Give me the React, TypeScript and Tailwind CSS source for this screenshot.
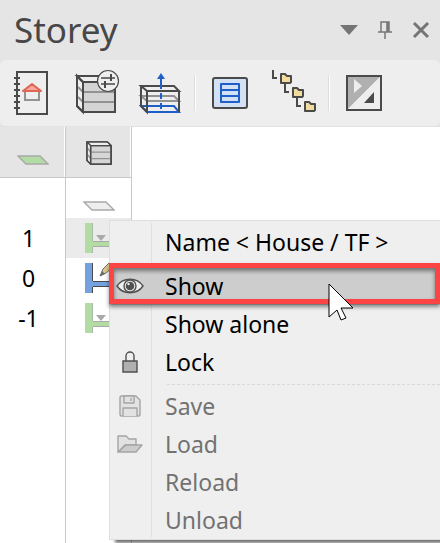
import type { ReactNode } from "react";

function ToolButton({ label, viewBox, children }: { label: string; viewBox: string; children: ReactNode }) {
  return (
    <button type="button" aria-label={label} className="h-12 w-16 shrink-0">
      <svg viewBox={viewBox} width="64" height="48" fill="none" stroke="#4a4a4a" strokeWidth="2">
        {children}
      </svg>
    </button>
  );
}

function Divider() {
  return <div className="mx-0.5 h-9 w-0.5 shrink-0 border-l border-[#dcdcdc] bg-white" />;
}

function Folder({ x, y }: { x: number; y: number }) {
  return (
    <g transform={`translate(${x} ${y})`}>
      <path d="M1 0v8h4" stroke="#4a4a4a" />
      <path d="M9 4h4l2 2h4v6l-1 1H9z" fill="#f1dc9d" stroke="#4a4a4a" strokeLinejoin="round" />
    </g>
  );
}

function Toolbar() {
  return (
    <div role="toolbar" className="flex h-[66px] items-center rounded-md bg-[#eeeeee]">
      <ToolButton label="Project" viewBox="0 69 64 48">
        <path d="M17 72h30v42H17z" />
        <path d="M14 78h6M14 84h6M14 90h6M14 96h6M14 102h6M14 108h6" />
        <path d="M25 91v9h14v-9" fill="#eeeeee" stroke="#929292" />
        <path d="M23 91l9-7 9 7z" fill="#f6a69c" stroke="#df6555" strokeLinejoin="round" />
      </ToolButton>
      <ToolButton label="Storey settings" viewBox="64 69 64 48">
        <path d="M77 76l6 6v30l-6-6z" fill="#eeeeee" />
        <path d="M77 76h32l7 6H83z" fill="#eeeeee" />
        <path d="M83 82h32v30H83z" fill="#d4d4d4" />
        <path d="M78 87l5 5h32M78 97l5 5h32" stroke="#929292" />
        <path d="M77 76l6 6h32v30H83l-6-6V76zM83 82v30" />
        <circle cx="108" cy="81" r="10.500" fill="#eeeeee" strokeWidth="1.2" />
        <path d="M101 78h14M101 84h14" strokeWidth="1.4" />
        <path d="M111 74v7M105 81v7" />
      </ToolButton>
      <ToolButton label="Storey height" viewBox="128 69 64 48">
        <path d="M141 96l6 5h32l-5-5z" stroke="#929292" />
        <path d="M141 86h33l5 5h-32zM147 91v21M179 91v21M141 86v20" />
        <path d="M141 106l6 6h32l-5-6z" stroke="#1f5fc9" />
        <path d="M141 86v20l6 6V91M179 91v21" />
        <path d="M161 78v11M161 93v6M161 103v6" stroke="#1f5fc9" />
        <path d="M161 73l4 6h-8z" fill="#1f5fc9" stroke="none" />
      </ToolButton>
      <Divider />
      <ToolButton label="List view" viewBox="198 69 64 48">
        <rect x="213" y="78" width="34" height="30" rx="2" fill="#d3e1f4" />
        <path d="M221 84h18v18h-18zM221 90h18M221 96h18" stroke="#1f5fc9" strokeLinejoin="round" />
      </ToolButton>
      <ToolButton label="Structure" viewBox="262 69 64 48">
        <Folder x={272} y={70} />
        <Folder x={284} y={84} />
        <Folder x={296} y={98} />
      </ToolButton>
      <Divider />
      <ToolButton label="Visibility" viewBox="332 69 64 48">
        <path d="M347 76h34l-34 34z" fill="#b0b0b0" stroke="none" />
        <path d="M381 76v34h-34z" fill="#eeeeee" stroke="none" />
        <path d="M347 76h34v34h-34z" />
        <path d="M354 79l8 7-8 7z" fill="#eeeeee" stroke="none" />
        <path d="M374 92v11h-10z" fill="#4a4a4a" stroke="none" />
      </ToolButton>
    </div>
  );
}

function Plan({ fill }: { fill: string }) {
  return (
    <svg viewBox="0 0 32 10" width="32" height="10" fill={fill} stroke="#a9a9a9" strokeWidth="1.4" className="mx-auto">
      <path d="M1 1h22l8 8H9z" />
    </svg>
  );
}

function StoreyMark({ active = false }: { active?: boolean }) {
  return (
    <svg viewBox="0 0 34 32" width="34" height="32" className="ml-[18px]">
      <path d="M9 19h25v6H9z" fill={active ? "#4a4a4a" : "#a9a9a9"} />
      <path d="M8 20h26v4H8z" fill={active ? "#75a1df" : "#b2dca4"} />
      <path d="M1 1h8v30H1z" fill={active ? "#75a1df" : "#b2dca4"} />
      <path
        d="M8.500 1v18M8.500 25v6"
        stroke={active ? "#4a4a4a" : "#a9bba4"}
      />
      {active ? (
        <>
          <path d="M16 14l3-7 9-9 4 4-10 9z" fill="#dcc68c" stroke="#6b6b6b" />
          <path d="M16 14l2-5 3 3z" fill="#6b6b6b" />
        </>
      ) : (
        <path d="M12 13h10l-5 6z" fill="#a9a9a9" />
      )}
    </svg>
  );
}

function StoreyTable() {
  const names = ["1", "0", "-1"];
  return (
    <table className="w-[132px] table-fixed border-separate border-spacing-0 bg-white">
      <thead>
        <tr className="h-[51px]">
          <th aria-label="Level" className="border-r border-b border-[#c8c8c8] bg-[#e5e5e5] p-0 shadow-[inset_-1px_0_0_white]">
            <div className="pt-4"><Plan fill="#b2dca4" /></div>
          </th>
          <th aria-label="Building" className="border-r border-b border-[#c8c8c8] bg-[#e5e5e5] p-0 pt-0.5 shadow-[inset_-1px_0_0_white]">
            <svg viewBox="0 0 28 28" width="26" height="26" fill="none" stroke="#4a4a4a" strokeWidth="1.5" className="mx-auto">
              <path d="M1 2h22l4 4v20H5l-4-4z" fill="#eeeeee" />
              <path d="M5 6h22v20H5z" fill="#d6d6d6" />
              <path d="M1 8l4 5h22M1 15l4 5h22" stroke="#929292" />
              <path d="M1 2h22l4 4v20H5l-4-4zM1 2l4 4h22M5 6v20" />
            </svg>
          </th>
        </tr>
      </thead>
      <tbody>
        <tr className="h-10">
          <td className="border-r border-[#c8c8c8] p-0" />
          <td className="border-r border-[#c8c8c8] p-0">
            <div className="pt-4"><Plan fill="#eeeeee" /></div>
          </td>
        </tr>
        {names.map((name) => (
          <tr key={name} className="h-10">
            <td className="border-r border-[#c8c8c8] p-0 pr-2 text-center text-[23px] leading-8">{name}</td>
            <td className={name === "1" ? "border-r border-[#c8c8c8] bg-[#ebebeb] p-0" : "border-r border-[#c8c8c8] p-0"}>
              <StoreyMark active={name === "0"} />
            </td>
          </tr>
        ))}
        <tr className="h-[205px]">
          <td className="border-r border-[#c8c8c8] p-0" />
          <td className="border-r border-[#c8c8c8] p-0" />
        </tr>
      </tbody>
    </table>
  );
}

function MenuItem({ children, icon, disabled = false }: { children: ReactNode; icon?: ReactNode; disabled?: boolean }) {
  return (
    <button
      type="button"
      role="menuitem"
      disabled={disabled}
      className="flex h-[38px] w-full items-center text-left text-[23px] whitespace-nowrap text-black disabled:text-[#727272]"
    >
      <span className="flex w-[41px] shrink-0 justify-center pr-0.5">{icon}</span>
      <span className="pl-3.5">{children}</span>
    </button>
  );
}

function ContextMenu() {
  return (
    <div
      role="menu"
      className="absolute top-[220px] right-0 left-[109px] border-t border-b border-l border-[#dedede] bg-[#efefef] pt-0.5 shadow-[6px_3px_3px_rgba(0,0,0,0.55)]"
    >
      <div className="absolute top-0.5 bottom-0.5 left-[41px] w-px bg-[#e0e0e0]" />
      <MenuItem>Name &lt; House / TF &gt;</MenuItem>
      <div className="h-1.5" />
      <div className="relative bg-[#cdcdcd]">
        <MenuItem
          icon={
            <svg viewBox="0 0 28 16" width="28" height="16" fill="#efefef" stroke="#505050" strokeWidth="1.4">
              <path d="M1 8C7-1 21-1 27 8 21 17 7 17 1 8z" />
              <circle cx="14" cy="8" r="6" />
              <circle cx="14" cy="8" r="3.6" fill="#505050" />
              <circle cx="12.500" cy="6" r="1.200" fill="#efefef" stroke="none" />
            </svg>
          }
        >
          Show
        </MenuItem>
        <div className="absolute -top-1 right-0 bottom-px -left-px border-5 border-[#fc4444] shadow-[inset_0_3px_4px_rgba(0,0,0,0.45),0_3px_4px_rgba(0,0,0,0.45)]" />
        <svg viewBox="0 0 26 39" width="26" height="39" className="absolute top-4 left-[218px]">
          <path d="M1 1v33l8-7 4 10 5-2-5-10h12z" fill="#ffffff" stroke="#000000" />
        </svg>
      </div>
      <MenuItem>Show alone</MenuItem>
      <MenuItem
        icon={
          <svg viewBox="0 0 16 22" width="16" height="22" fill="none" stroke="#505050" strokeWidth="1.4">
            <path d="M4 10V5a4 4 0 0 1 8 0v5" />
            <path d="M1 10h14v11H1z" fill="#b0b0b0" />
          </svg>
        }
      >
        Lock
      </MenuItem>
      <div className="ml-[57px] flex h-1.5 items-center">
        <div className="w-full border-t border-dashed border-[#d9d9d9]" />
      </div>
      <MenuItem
        disabled
        icon={
          <svg viewBox="0 0 22 22" width="22" height="22" fill="#e2e2e2" stroke="#a5a5a5" strokeWidth="1.4" strokeLinejoin="round">
            <path d="M2 1h15l4 4v15l-1 1H2l-1-1V2z" />
            <path d="M5 1h10v7H5zM4 21v-8h14v8M12 3v3" />
          </svg>
        }
      >
        Save
      </MenuItem>
      <MenuItem
        disabled
        icon={
          <svg viewBox="0 0 26 20" width="26" height="20" fill="#e2e2e2" stroke="#a5a5a5" strokeWidth="1.4" strokeLinejoin="round">
            <path d="M1 18V2h8l3 3h7v6H8z" />
            <path d="M1 18l8-7h16l-6 7z" fill="#cccccc" />
          </svg>
        }
      >
        Load
      </MenuItem>
      <MenuItem disabled>Reload</MenuItem>
      <MenuItem disabled>Unload</MenuItem>
    </div>
  );
}

export default function App() {
  return (
    <main className="relative min-h-screen overflow-hidden bg-white font-['Noto_Sans','Open_Sans',sans-serif] text-black">
      <div className="bg-[#e5e5e5]">
        <header className="flex h-[60px] items-center pr-1.5 pl-3.5">
          <h1 className="flex-1 text-[35px] text-[#474747]">Storey</h1>
          <button type="button" aria-label="Panel options" className="mr-5">
            <svg viewBox="0 0 18 10" width="18" height="10" fill="#757575"><path d="M0 0h18L9 10z" /></svg>
          </button>
          <button type="button" aria-label="Pin panel" className="mr-5">
            <svg viewBox="0 0 14 18" width="14" height="18" fill="none" stroke="#757575" strokeWidth="1.500">
              <path d="M3 11V1h8v10M0 11h14M7 11v7" />
              <path d="M9.500 1v10" strokeWidth="2.500" />
            </svg>
          </button>
          <button type="button" aria-label="Close panel" className="mr-1">
            <svg viewBox="0 0 18 18" width="18" height="18" stroke="#757575" strokeWidth="3"><path d="M2 2l14 14M16 2L2 16" /></svg>
          </button>
        </header>
        <Toolbar />
      </div>
      <div className="border-t border-[#e2e2e2]">
        <StoreyTable />
      </div>
      <ContextMenu />
    </main>
  );
}
